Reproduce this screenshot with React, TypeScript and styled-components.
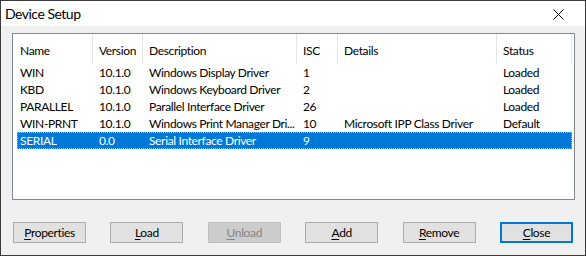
import React from "react";
import styled, { createGlobalStyle } from "styled-components";

const FONT = `"Lato", "Roboto", sans-serif`;

const Global = createGlobalStyle`
  html, body { margin: 0; padding: 0; background: #f0f0f0; }
  body { font-family: ${FONT}; }
  * { box-sizing: border-box; }
`;

const Window = styled.div`
  width: 586px;
  height: 256px;
  border: 1px solid #3a3a3a;
  background: #f0f0f0;
  display: flex;
  flex-direction: column;
`;

const TitleBar = styled.div`
  height: 25px;
  flex: none;
  background: #ffffff;
  display: flex;
  align-items: center;
  justify-content: space-between;
  padding: 0 21px 0 4px;
`;

const Title = styled.span`
  font-size: 14px;
  letter-spacing: -0.5px;
  color: #000;
  line-height: 1;
  padding-top: 1px;
`;

const CloseGlyph = styled.svg`
  width: 11px;
  height: 11px;
  display: block;
  margin-top: 2px;
`;

const Body = styled.div`
  flex: 1;
  display: flex;
  flex-direction: column;
  padding: 7px 10px 0 11px;
`;

const ListBox = styled.div`
  height: 167px;
  border: 1px solid #828790;
  background: #ffffff;
  display: flex;
  flex-direction: column;
`;

const COLS = "80px 50px 154px 41px 159px 75px";

const HeaderRow = styled.div`
  display: grid;
  grid-template-columns: ${COLS};
  height: 30px;
  flex: none;
`;

const HeaderCell = styled.div`
  font-size: 12px;
  letter-spacing: -0.35px;
  color: #000;
  display: flex;
  align-items: center;
  padding: 3px 0 0 6px;
  border-right: 1px solid #e5e5e5;
  white-space: nowrap;
  overflow: hidden;
  &:first-child { padding-left: 7px; }
`;

const Row = styled.div<{ $selected?: boolean }>`
  display: grid;
  grid-template-columns: 76px 50px 154px 41px 159px 75px;
  height: 17px;
  margin-left: 4px;
  width: max-content;
  background: ${(p) => (p.$selected ? "#0078d7" : "transparent")};
  color: ${(p) => (p.$selected ? "#ffffff" : "#000000")};
  outline: ${(p) => (p.$selected ? "1px dotted rgba(255,255,255,0.55)" : "none")};
  outline-offset: -1px;
`;

const Cell = styled.div`
  font-size: 12px;
  letter-spacing: -0.35px;
  line-height: 17px;
  padding-left: 6px;
  white-space: nowrap;
  overflow: hidden;
  &:first-child { padding-left: 3px; }
`;

const ButtonBar = styled.div`
  display: flex;
  justify-content: space-between;
  margin-top: 22px;
  padding-left: 1px;
  width: 561px;
`;

const Button = styled.button<{ $default?: boolean }>`
  width: 73px;
  height: 21px;
  padding: 0 0 1px 0;
  font-family: ${FONT};
  font-size: 12px;
  letter-spacing: -0.35px;
  background: #e1e1e1;
  color: #000;
  border: 1px solid #adadad;
  ${(p) => (p.$default ? "border: 2px solid #0078d7;" : "")}
  &:disabled {
    background: #cccccc;
    border-color: #bfbfbf;
    color: #838383;
  }
  u { text-decoration-thickness: 1px; text-underline-offset: 2px; }
`;

const rows = [
  ["WIN", "10.1.0", "Windows Display Driver", "1", "", "Loaded"],
  ["KBD", "10.1.0", "Windows Keyboard Driver", "2", "", "Loaded"],
  ["PARALLEL", "10.1.0", "Parallel Interface Driver", "26", "", "Loaded"],
  ["WIN-PRNT", "10.1.0", "Windows Print Manager Dri...", "10", "Microsoft IPP Class Driver", "Default"],
  ["SERIAL", "0.0", "Serial Interface Driver", "9", "", ""],
];

const headers = ["Name", "Version", "Description", "ISC", "Details", "Status"];

const buttons: { key: string; rest: string; disabled?: boolean; def?: boolean }[] = [
  { key: "P", rest: "roperties" },
  { key: "L", rest: "oad" },
  { key: "U", rest: "nload", disabled: true },
  { key: "A", rest: "dd" },
  { key: "R", rest: "emove" },
  { key: "C", rest: "lose", def: true },
];

export default function App() {
  return (
    <>
      <Global />
      <Window>
        <TitleBar>
          <Title>Device Setup</Title>
          <CloseGlyph viewBox="0 0 11 11">
            <path d="M0.5 0.5 L10.5 10.5 M10.5 0.5 L0.5 10.5" stroke="#000" strokeWidth="1" fill="none" />
          </CloseGlyph>
        </TitleBar>
        <Body>
          <ListBox>
            <HeaderRow>
              {headers.map((h) => (
                <HeaderCell key={h}>{h}</HeaderCell>
              ))}
            </HeaderRow>
            {rows.map((r, i) => (
              <Row key={r[0]} $selected={i === 4}>
                {r.map((c, j) => (
                  <Cell key={j}>{c}</Cell>
                ))}
              </Row>
            ))}
          </ListBox>
          <ButtonBar>
            {buttons.map((b) => (
              <Button key={b.key} disabled={b.disabled} $default={b.def}>
                <u>{b.key}</u>
                {b.rest}
              </Button>
            ))}
          </ButtonBar>
        </Body>
      </Window>
    </>
  );
}
